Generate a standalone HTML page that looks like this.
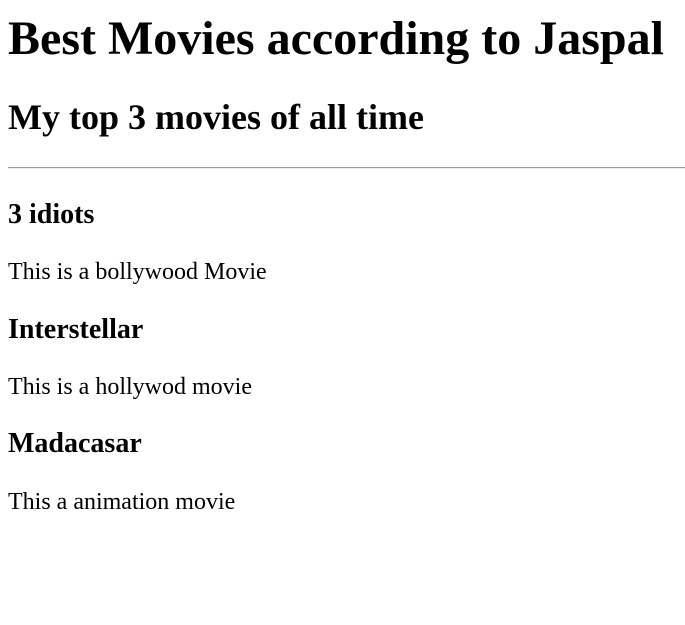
<!DOCTYPE html>
<html><head><meta charset="utf-8"><style>
html,body{margin:0;padding:0;background:#fff;width:685px;height:625px;overflow:hidden;font-family:"Liberation Serif",serif;color:#000}
.a{position:absolute;left:8px;white-space:nowrap;margin:0}
h1.a{font-size:48px;line-height:55px;top:11px;font-weight:bold}
h2.a{font-size:36px;line-height:41px;top:97px;font-weight:bold}
h3.a{font-size:28px;line-height:32px;font-weight:bold}
p.a{font-size:24px;line-height:28px}
.hr{position:absolute;left:8px;right:0;top:167px;height:0;border-top:1px solid #9a9a9a;border-bottom:1px solid #eee}
</style></head><body>
<h1 class="a">Best Movies according to Jaspal</h1>
<h2 class="a">My top 3 movies of all time</h2>
<div class="hr"></div>
<h3 class="a" style="top:199px">3 idiots</h3>
<p class="a" style="top:258px">This is a bollywood Movie</p>
<h3 class="a" style="top:314px">Interstellar</h3>
<p class="a" style="top:373px">This is a hollywod movie</p>
<h3 class="a" style="top:428px">Madacasar</h3>
<p class="a" style="top:488px">This a animation movie</p>
</body></html>
